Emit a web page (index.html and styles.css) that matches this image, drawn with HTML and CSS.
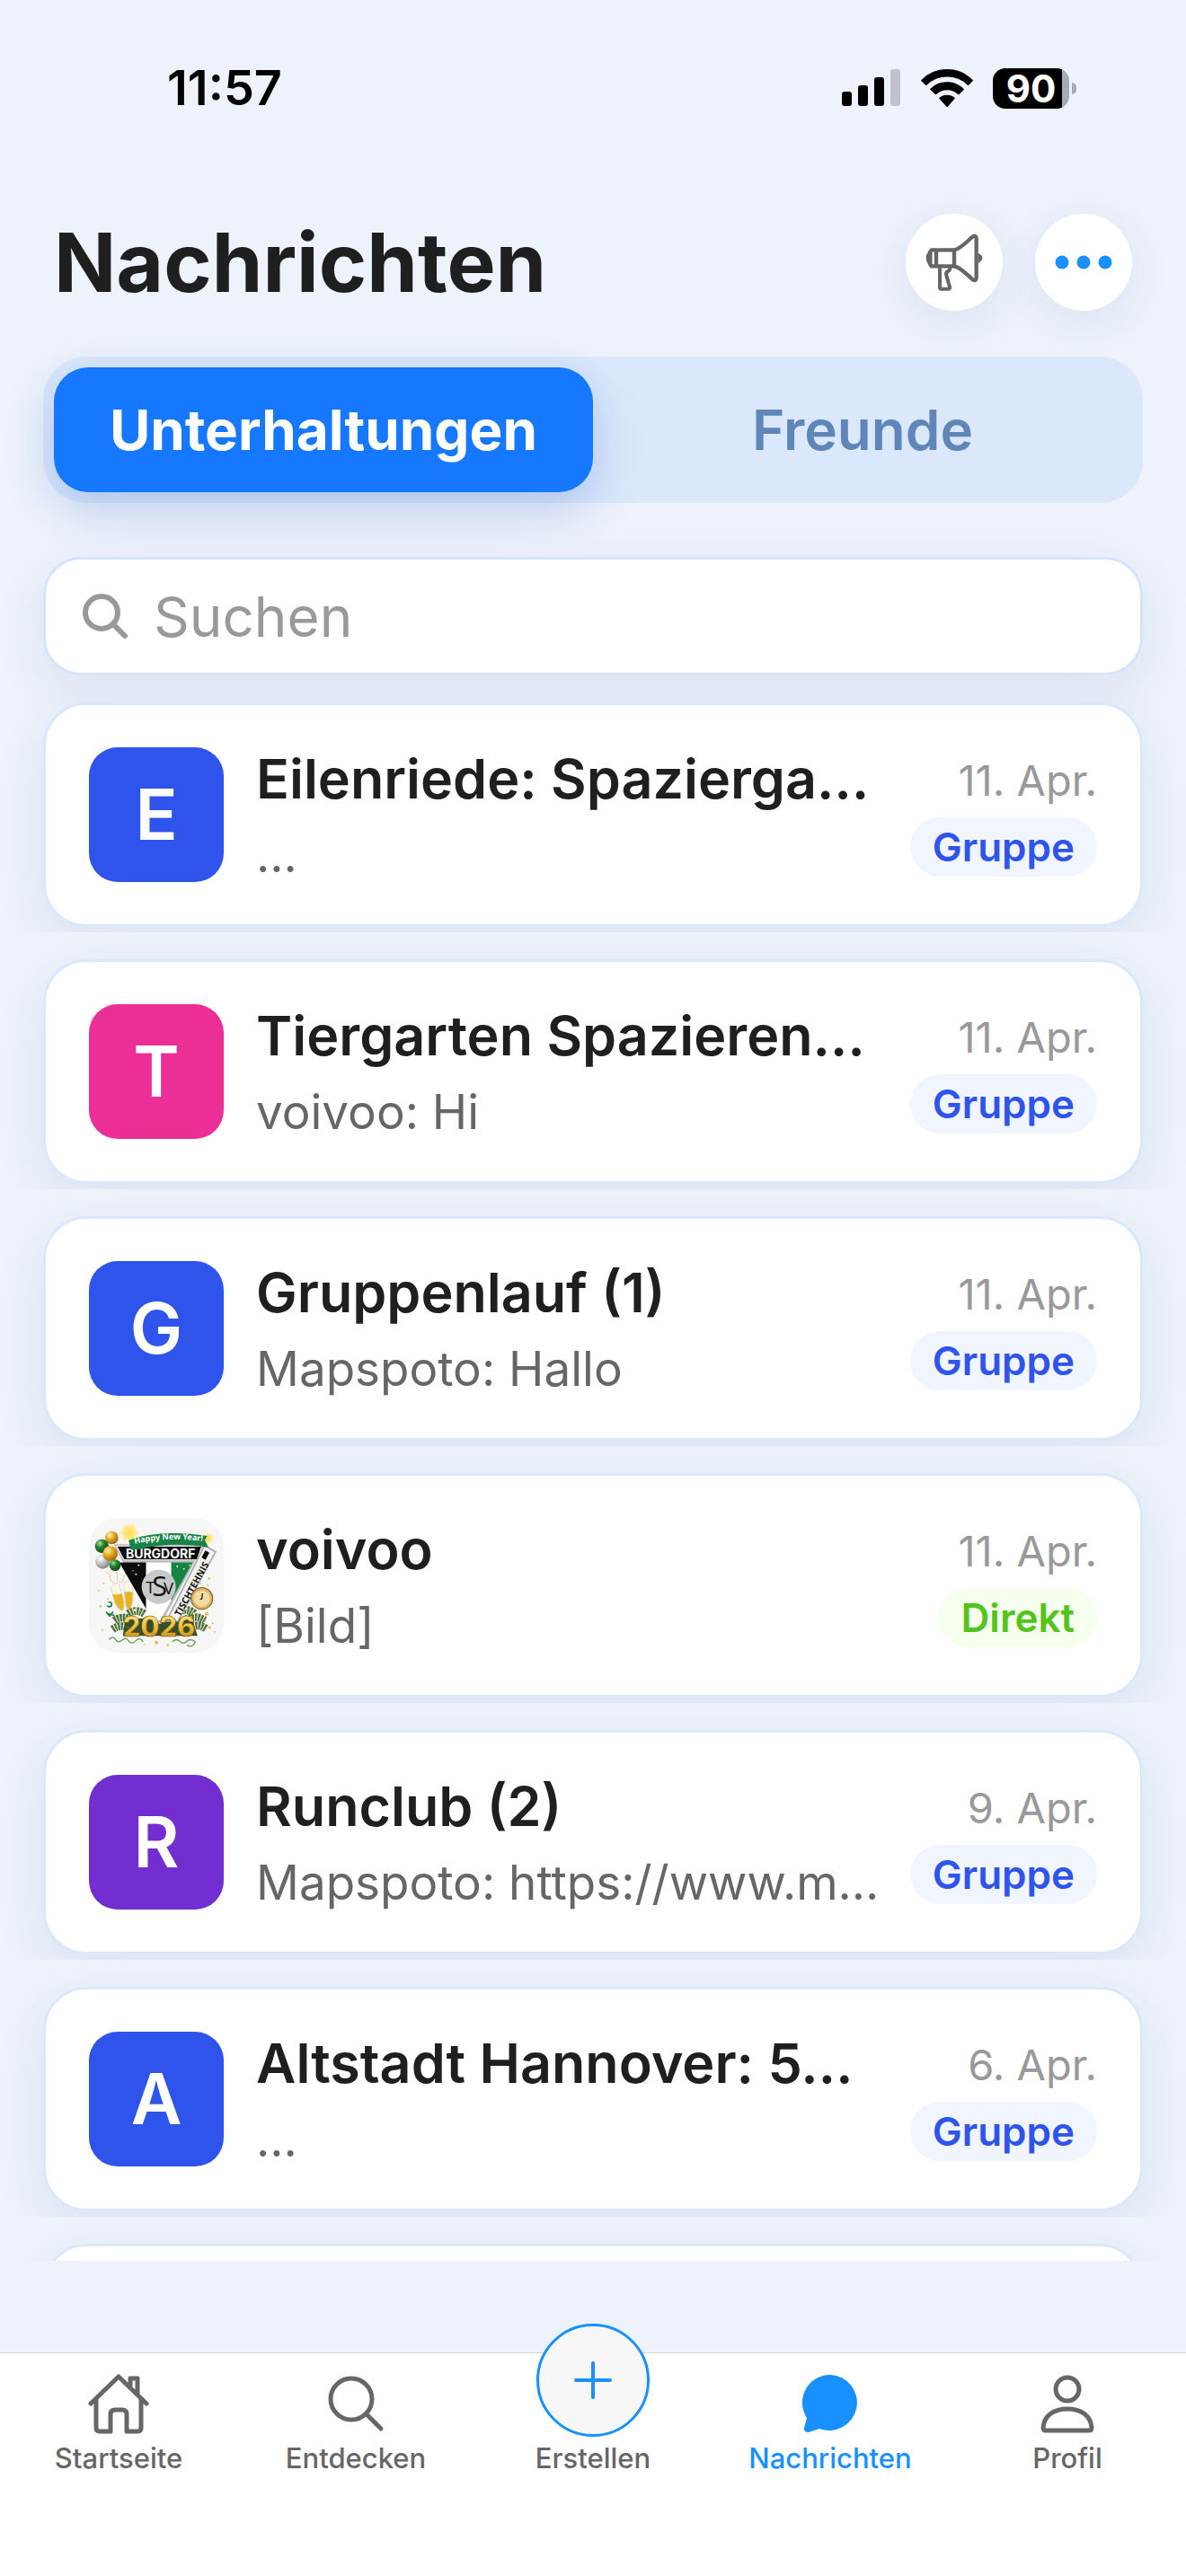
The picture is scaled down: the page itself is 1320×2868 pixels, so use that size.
FILE: index.html
```
<!DOCTYPE html>
<html lang="de">
<head>
  <meta charset="UTF-8" />
  <title>Nachrichten</title>
  <meta name="viewport" content="width=device-width, initial-scale=1" />
  <link rel="stylesheet" href="styles.css">
</head>
<body>
  <div class="status-bar">
    <span class="status-time">11:57</span>
    <div class="status-icons">
      <svg width="66" height="42" viewBox="0 0 66 42" aria-hidden="true">
        <rect x="0" y="25" width="11" height="16" rx="3" />
        <rect x="18" y="18" width="11" height="23" rx="3" />
        <rect x="36" y="9" width="11" height="32" rx="3" />
        <rect x="54" y="0" width="11" height="41" rx="3" fill="#bfc2cb" />
      </svg>
      <svg width="58" height="42" viewBox="374 75 173 126" aria-hidden="true">
        <path d="M461 75c33 0 63 13 85 36q2 2 0 4l-13 13q-2 2-4 0a97 97 0 0 0-136 0q-2 2-4 0l-14-13q-2-2 0-4a118 118 0 0 1 86-36z" />
        <path d="M461 118c21 0 40 8 55 22q2 2 0 4l-15 15q-2 2-4 0a52 52 0 0 0-72 0q-2 2-4 0l-16-15q-2-2 0-4a80 80 0 0 1 56-22z" />
        <path d="M461 161c10 0 18 3 25 9q2 2 0 4l-23 26q-2 2-4 0l-24-26q-2-2 0-4c7-6 16-9 26-9z" />
      </svg>
      <div class="battery"><span class="battery-level">90</span></div>
    </div>
  </div>

  <header class="header">
    <h1>Nachrichten</h1>
    <div class="header-actions">
      <button type="button" class="round-button" aria-label="Ankündigungen">
        <svg width="64" height="64" viewBox="390 630 192 192" fill="none" stroke="#666" stroke-width="13" stroke-linejoin="round" aria-hidden="true">
          <path d="M410 685h76v54h-76l-4-6v-42z" />
          <path d="M426 685v54" />
          <path d="M486 685c22-4 42-28 62-45q12-6 12 6v132q0 12-12 6c-20-17-40-41-62-45" />
          <path d="M438 744v66q0 5 5 5h24q6 0 4-7l-11-38q-3-11 7-15q5-2 5-11" stroke-width="12" />
          <path d="M405 684q-13 14-13 28t13 28zM566 695q14 7 14 17t-14 17z" fill="#666" stroke="none" />
        </svg>
      </button>
      <button type="button" class="round-button" aria-label="Mehr">
        <svg width="64" height="16" viewBox="0 0 64 16" fill="#1890ff" aria-hidden="true">
          <circle cx="8" cy="8" r="7.5" /><circle cx="32" cy="8" r="7.5" /><circle cx="56" cy="8" r="7.5" />
        </svg>
      </button>
    </div>
  </header>

  <div class="tabs" role="tablist">
    <button type="button" class="tab tab-active" role="tab" aria-selected="true">Unterhaltungen</button>
    <button type="button" class="tab" role="tab" aria-selected="false">Freunde</button>
  </div>

  <label class="search">
    <svg width="52" height="52" viewBox="0 0 52 52" fill="none" stroke="#999" stroke-width="6" stroke-linecap="round" aria-hidden="true">
      <circle cx="22" cy="22" r="18" /><path d="M35 35l13 13" />
    </svg>
    <input type="search" placeholder="Suchen" aria-label="Suchen">
  </label>

  <ul class="chat-list">
    <li>
      <a class="chat" href="#">
        <span class="avatar avatar-blue">E</span>
        <span class="chat-text">
          <span class="chat-title">Eilenriede: Spazierga…</span>
          <span class="chat-preview">…</span>
        </span>
        <span class="chat-meta"><time>11. Apr.</time><span class="tag tag-group">Gruppe</span></span>
      </a>
    </li>
    <li>
      <a class="chat" href="#">
        <span class="avatar avatar-pink">T</span>
        <span class="chat-text">
          <span class="chat-title">Tiergarten Spazieren…</span>
          <span class="chat-preview">voivoo: Hi</span>
        </span>
        <span class="chat-meta"><time>11. Apr.</time><span class="tag tag-group">Gruppe</span></span>
      </a>
    </li>
    <li>
      <a class="chat" href="#">
        <span class="avatar avatar-blue">G</span>
        <span class="chat-text">
          <span class="chat-title">Gruppenlauf (1)</span>
          <span class="chat-preview">Mapspoto: Hallo</span>
        </span>
        <span class="chat-meta"><time>11. Apr.</time><span class="tag tag-group">Gruppe</span></span>
      </a>
    </li>
    <li>
      <a class="chat" href="#">
        <span class="avatar avatar-photo">
          <svg width="150" height="150" viewBox="27 30 450 450" aria-hidden="true">
            <defs>
              <linearGradient id="gold" x1="0" y1="0" x2="0" y2="1">
                <stop offset="0" stop-color="#fff0a0" /><stop offset=".5" stop-color="#f0c23c" /><stop offset="1" stop-color="#b87d0c" />
              </linearGradient>
              <radialGradient id="ball-gold" cx=".35" cy=".3" r=".8">
                <stop offset="0" stop-color="#fff3b0" /><stop offset=".45" stop-color="#e3a51c" /><stop offset="1" stop-color="#8a5a06" />
              </radialGradient>
              <radialGradient id="ball-green" cx=".35" cy=".3" r=".8">
                <stop offset="0" stop-color="#a8e09a" /><stop offset=".4" stop-color="#23802a" /><stop offset="1" stop-color="#0b3f12" />
              </radialGradient>
              <radialGradient id="ball-silver" cx=".35" cy=".3" r=".8">
                <stop offset="0" stop-color="#fff" /><stop offset=".5" stop-color="#bbb" /><stop offset="1" stop-color="#777" />
              </radialGradient>
              <radialGradient id="spark">
                <stop offset="0" stop-color="#ffe14a" /><stop offset=".5" stop-color="#ffe98a" /><stop offset="1" stop-color="#f7f7f7" stop-opacity="0" />
              </radialGradient>
              <clipPath id="shield"><path d="M128 178H374L264 372H240z" /></clipPath>
              <path id="banner-line" d="M180 117Q285 92 410 108" />
            </defs>
            <circle cx="162" cy="80" r="38" fill="url(#spark)" />
            <path d="M162 50v58M132 80h62M140 58l44 44M184 58l-44 44M150 52l26 58M176 52l-30 56" stroke="#ffe05a" stroke-width="2" />
            <circle cx="424" cy="98" r="24" fill="url(#spark)" />
            <!-- confetti -->
            <g fill="#e9bb55">
              <circle cx="60" cy="272" r="3" /><circle cx="76" cy="248" r="3" /><circle cx="66" cy="325" r="4" /><circle cx="90" cy="300" r="3" />
              <circle cx="428" cy="232" r="4" /><circle cx="424" cy="254" r="3" /><circle cx="400" cy="250" r="3" /><circle cx="420" cy="350" r="6" />
              <circle cx="440" cy="382" r="3" /><circle cx="446" cy="410" r="3" /><circle cx="290" cy="455" r="4" /><circle cx="252" cy="446" r="6" />
              <circle cx="72" cy="404" r="3" /><circle cx="430" cy="396" r="5" /><circle cx="212" cy="452" r="3" />
            </g>
            <!-- champagne -->
            <g fill="none" stroke="#e6cc85" stroke-width="3">
              <path d="M84 210q14 4 14 18t14 20M112 206q14 8 10 22t14 18M150 214l-14 30" />
            </g>
            <path d="M101 262q14-22 27-10l15 56q2 28-5 34q-14-4-25-28z" fill="#fbf6e6" stroke="#ccc" stroke-width="2" />
            <path d="M143 250q14-16 30-2l1 60q-6 26-14 32q-10-8-12-30z" fill="#fbf6e6" stroke="#ccc" stroke-width="2" />
            <path d="M105 284q17 4 32-2l6 30q1 20-5 28q-14-6-24-28zM146 278q14-4 27 0l-1 32q-4 20-12 27q-9-8-11-27z" fill="#e8b321" />
            <!-- fir branches -->
            <g fill="none" stroke="#4c6f38" stroke-width="26" stroke-dasharray="7 3">
              <path d="M112 372q24-16 56-4M106 402q30-22 60 2M158 350q26-18 54 0M326 344q30-16 54 6M352 368q30-16 62 4M364 398q26-18 54 2" />
            </g>
            <path d="M150 366h220l20 58H140z" fill="#33502a" />
            <g fill="none" stroke="#87a563" stroke-width="4" stroke-dasharray="3 8">
              <path d="M104 366q32-22 64 4M104 398q28-20 58 0M155 345q30-20 58 6M326 340q30-16 56 12M364 366q30-16 52 10M366 394q30-16 50 4" />
            </g>
            <g fill="none" stroke="#6c9e58" stroke-width="4">
              <path d="M94 436q14-14 22 0t22 2t22 4q12 12 24-2t24 4M306 444q12-14 24-2t24 0t28 2q-6 20-28 12" />
            </g>
            <path d="M92 312q14-4 10 12q-10 6-14-2M84 344l12 14l12-14M112 356l-26-8" fill="none" stroke="#188246" stroke-width="5" />
            <!-- club pennant -->
            <path d="M110 118H412L268 384H246z" fill="#bbb" />
            <path d="M120 124H404L388 170H144z" fill="#0b0b0b" stroke="#fff" stroke-width="3" />
            <g clip-path="url(#shield)">
              <path d="M128 178h90v210h-90z" fill="#0d0d0d" /><path d="M218 178h84v210h-84z" fill="#fff" /><path d="M302 178h90v210h-90z" fill="#158343" />
            </g>
            <path d="M413 122l37 21l-126 232h-38z" fill="#f2f2f2" stroke="#aaa" stroke-width="5" />
            <path d="M416 138l13 8l-13 24l-13-8z" fill="#0c0c0c" />
            <circle cx="260" cy="260" r="57" fill="#c9c9c9" />
            <text x="266" y="165" class="pennant-name" text-anchor="middle">BURGDORF</text>
            <text x="217" y="282" class="pennant-club">T</text>
            <text x="238" y="292" class="pennant-club pennant-club-large">S</text>
            <text x="276" y="284" class="pennant-club">V</text>
            <text class="pennant-side" transform="translate(331 360) rotate(-61)">TISCHTEHNIS</text>
            <path d="M166 136l-6-32q105-38 262-14l-8 14l12 24q-120-20-228 6z" fill="#178347" />
            <text class="banner-text"><textPath href="#banner-line">Happy New Year!</textPath></text>
            <g fill="#ffe873">
              <circle cx="193" cy="188" r="3" /><circle cx="184" cy="218" r="3" /><circle cx="174" cy="206" r="2" /><circle cx="322" cy="192" r="3" /><circle cx="344" cy="200" r="3" /><circle cx="364" cy="188" r="3" />
              <circle cx="180" cy="338" r="4" /><circle cx="352" cy="334" r="4" /><circle cx="378" cy="350" r="4" />
            </g>
            <!-- balloons -->
            <circle cx="103" cy="96" r="22" fill="url(#ball-gold)" /><circle cx="70" cy="124" r="23" fill="url(#ball-green)" />
            <circle cx="73" cy="176" r="24" fill="url(#ball-silver)" /><circle cx="114" cy="188" r="19" fill="url(#ball-green)" />
            <circle cx="98" cy="149" r="25" fill="url(#ball-gold)" />
            <circle cx="404" cy="299" r="36" fill="#dcb86a" stroke="#94692a" stroke-width="4" />
            <circle cx="404" cy="299" r="27" fill="#f1dba2" />
            <path d="M406 282l-2 18l-6 2" fill="none" stroke="#222" stroke-width="4" />
            <text x="261" y="427" class="year" text-anchor="middle">2026</text>
          </svg>
        </span>
        <span class="chat-text">
          <span class="chat-title">voivoo</span>
          <span class="chat-preview">[Bild]</span>
        </span>
        <span class="chat-meta"><time>11. Apr.</time><span class="tag tag-direct">Direkt</span></span>
      </a>
    </li>
    <li>
      <a class="chat" href="#">
        <span class="avatar avatar-purple">R</span>
        <span class="chat-text">
          <span class="chat-title">Runclub (2)</span>
          <span class="chat-preview">Mapspoto: https://www.m…</span>
        </span>
        <span class="chat-meta"><time>9. Apr.</time><span class="tag tag-group">Gruppe</span></span>
      </a>
    </li>
    <li>
      <a class="chat" href="#">
        <span class="avatar avatar-blue">A</span>
        <span class="chat-text">
          <span class="chat-title">Altstadt Hannover: 5…</span>
          <span class="chat-preview">…</span>
        </span>
        <span class="chat-meta"><time>6. Apr.</time><span class="tag tag-group">Gruppe</span></span>
      </a>
    </li>
    <li>
      <a class="chat" href="#" aria-label="Weitere Unterhaltung"></a>
    </li>
  </ul>

  <nav class="tab-bar">
    <a href="#">
      <svg class="nav-icon" viewBox="0 0 68 68" aria-hidden="true">
        <path d="M3 34L34 4l31 30M9 29v32q0 4 4 4h12V46q0-5 5-5h8q5 0 5 5v19h12q4 0 4-4V29M47 14V6h8v18" />
      </svg>
      <span>Startseite</span>
    </a>
    <a href="#">
      <svg class="nav-icon" viewBox="0 0 68 68" aria-hidden="true">
        <circle cx="29" cy="29" r="23" /><path d="M46 46l16 16" />
      </svg>
      <span>Entdecken</span>
    </a>
    <a href="#">
      <span class="create-circle">
        <svg width="44" height="44" viewBox="0 0 44 44" fill="none" stroke="#1890ff" stroke-width="4" stroke-linecap="round" aria-hidden="true">
          <path d="M22 3v38M3 22h38" />
        </svg>
      </span>
      <span>Erstellen</span>
    </a>
    <a href="#" class="nav-active" aria-current="page">
      <svg class="nav-icon" viewBox="0 0 68 68" aria-hidden="true">
        <path class="nav-fill" d="M34 2a31 31 0 1 1-12 60l-12 4q-6 0-5-5l3-11A31 31 0 0 1 34 2z" />
      </svg>
      <span>Nachrichten</span>
    </a>
    <a href="#">
      <svg class="nav-icon" viewBox="0 0 68 68" aria-hidden="true">
        <circle cx="34" cy="18" r="13" /><path d="M7 61c1-14 12-21 27-21s26 7 27 21q0 3-3 3H10q-3 0-3-3z" />
      </svg>
      <span>Profil</span>
    </a>
  </nav>
</body>
</html>
```
FILE: styles.css
```
* {
  box-sizing: border-box;
}
body {
  margin: 0;
  height: 100vh;
  display: flex;
  flex-direction: column;
  font-family: Inter, "Liberation Sans", sans-serif;
  background: #edf2fb;
  color: #1f1f1f;
}
button, input {
  font-family: inherit;
  border: none;
}
a {
  color: inherit;
  text-decoration: none;
}
svg {
  display: block;
  flex: none;
}

.status-bar {
  display: flex;
  justify-content: space-between;
  align-items: center;
  padding: 66px 130px 0 186px;
  color: #000;
}
.status-time {
  font-size: 54px;
  line-height: 64px;
  font-weight: 600;
}
.status-icons {
  display: flex;
  align-items: center;
  gap: 22px;
}
.battery {
  position: relative;
  width: 85px;
  height: 45px;
  border-radius: 14px;
  background: linear-gradient(to right, #000 77px, #a7aab4 77px);
}
.battery::after {
  content: "";
  position: absolute;
  left: 88px;
  top: 16px;
  width: 5px;
  height: 13px;
  border-radius: 0 6px 6px 0;
  background: #a7aab4;
}
.battery-level {
  display: block;
  text-align: center;
  color: #fff;
  font-size: 42px;
  line-height: 45px;
  font-weight: 700;
}

.header {
  display: flex;
  justify-content: space-between;
  align-items: center;
  padding: 108px 60px 51px;
}
.header h1 {
  margin: 0;
  font-size: 91px;
  line-height: 108px;
  font-weight: 700;
}
.header-actions {
  display: flex;
  gap: 36px;
}
.round-button {
  display: flex;
  align-items: center;
  justify-content: center;
  width: 108px;
  height: 108px;
  padding: 0;
  border-radius: 50%;
  background: #fff;
  box-shadow: 0 12px 48px rgba(60, 110, 170, 0.1);
  cursor: pointer;
}

.tabs {
  display: flex;
  margin: 0 48px 60px;
  padding: 12px;
  border-radius: 48px;
  background: #dbe8fb;
}
.tab {
  flex: 1;
  height: 139px;
  border-radius: 38px;
  background: none;
  color: #5e86b8;
  font-size: 62px;
  font-weight: 600;
  cursor: pointer;
}
.tab-active {
  background: #1677ff;
  color: #fff;
  font-weight: 700;
  box-shadow: 0 18px 54px rgba(22, 80, 190, 0.24);
}

.search {
  display: flex;
  align-items: center;
  gap: 28px;
  height: 132px;
  margin: 0 48px;
  padding: 0 40px;
  border: 3px solid #d6e4fb;
  border-radius: 42px;
  background: #fff;
  box-shadow: 0 18px 54px rgba(60, 110, 170, 0.1);
}
.search input {
  flex: 1;
  min-width: 0;
  padding: 0;
  background: none;
  outline: none;
  font-size: 62px;
}
.search input::placeholder {
  color: #999;
}

.chat-list {
  flex: 1;
  min-height: 0;
  margin: 0 0 102px;
  padding: 0;
  list-style: none;
  overflow-y: auto;
  scrollbar-width: none;
}
.chat-list li {
  padding: 30px 48px 6px;
  overflow: hidden;
}
.chat {
  display: flex;
  align-items: center;
  gap: 12px;
  height: 250px;
  padding: 0 48px;
  border: 3px solid #dbe8fc;
  border-radius: 48px;
  background: #fff;
  box-shadow: 0 18px 54px rgba(60, 110, 170, 0.1);
}
.avatar {
  flex: none;
  width: 150px;
  height: 150px;
  margin-right: 24px;
  border-radius: 32px;
  overflow: hidden;
  color: #fff;
  font-size: 78px;
  line-height: 150px;
  font-weight: 600;
  text-align: center;
}
.avatar-blue {
  background: #2f54eb;
}
.avatar-pink {
  background: #eb2f96;
}
.avatar-purple {
  background: #722ed1;
}
.avatar-photo {
  background: #f6f6f6;
}
.chat-text {
  flex: 1;
  min-width: 0;
  display: flex;
  flex-direction: column;
  gap: 14px;
}
.chat-title,
.chat-preview {
  overflow: hidden;
  text-overflow: ellipsis;
  white-space: nowrap;
}
.chat-title {
  font-size: 61px;
  line-height: 76px;
  font-weight: 600;
}
.chat-preview {
  color: #666;
  font-size: 53px;
  line-height: 66px;
}
.chat-meta {
  display: flex;
  flex-direction: column;
  align-items: flex-end;
  gap: 11px;
}
.chat-meta time {
  color: #999;
  font-size: 47px;
  line-height: 60px;
}
.tag {
  padding: 0 25px;
  border-radius: 33px;
  font-size: 44px;
  line-height: 66px;
  font-weight: 600;
}
.tag-group {
  color: #2f54eb;
  background: #f0f5ff;
}
.tag-direct {
  color: #52c41a;
  background: #f6ffed;
}

/* lettering inside the club picture */
.pennant-name {
  font: 700 42px Inter, sans-serif;
  fill: #fff;
}
.pennant-club {
  font: 500 56px "Open Sans", sans-serif;
  fill: #111;
}
.pennant-club-large {
  font-size: 92px;
}
.pennant-side {
  font: 700 31px "Open Sans", sans-serif;
  fill: #111;
}
.banner-text {
  font: 700 27px "Noto Sans", sans-serif;
  fill: #fff;
}
.year {
  font: 800 92px Inter, sans-serif;
  fill: url(#gold);
  stroke: #6d4a0a;
  stroke-width: 2px;
}

.tab-bar {
  display: flex;
  height: 249px;
  border-top: 1px solid #d4d7dd;
  background: #fff;
  color: #666;
  font-size: 31px;
  line-height: 36px;
  font-weight: 500;
}
.tab-bar a {
  flex: 1;
  display: flex;
  flex-direction: column;
  align-items: center;
  gap: 9px;
  padding-top: 22px;
}
.nav-icon {
  width: 68px;
  height: 68px;
  fill: none;
  stroke: #666;
  stroke-width: 5px;
  stroke-linecap: round;
  stroke-linejoin: round;
}
.nav-fill {
  fill: #1890ff;
  stroke: none;
}
.nav-active {
  color: #1890ff;
}
.create-circle {
  display: flex;
  align-items: center;
  justify-content: center;
  width: 126px;
  height: 126px;
  margin-top: -55px;
  margin-bottom: -3px;
  border: 3px solid #1890ff;
  border-radius: 50%;
  background: #f7f7f7;
}
```
